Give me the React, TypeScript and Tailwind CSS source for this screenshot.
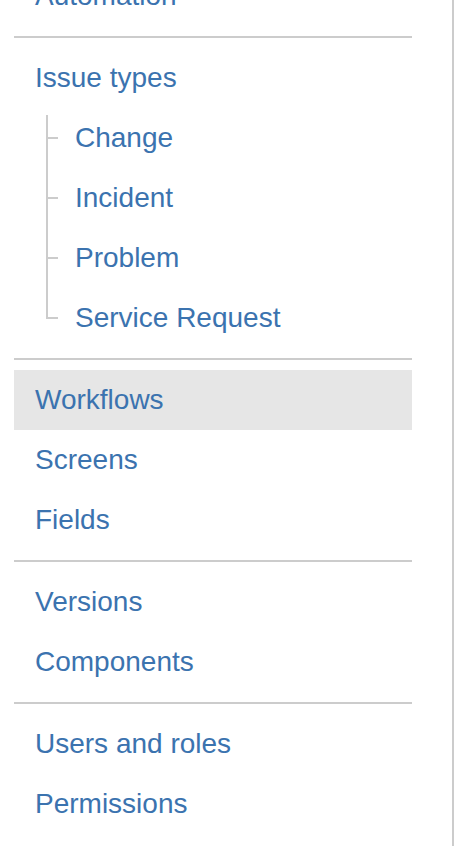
import React from "react";

type Item = { label: string; active?: boolean };

const sections: { items: Item[]; children?: string[] }[] = [
  { items: [{ label: "Issue types" }], children: ["Change", "Incident", "Problem", "Service Request"] },
  { items: [{ label: "Workflows", active: true }, { label: "Screens" }, { label: "Fields" }] },
  { items: [{ label: "Versions" }, { label: "Components" }] },
  { items: [{ label: "Users and roles" }, { label: "Permissions" }] },
];

function NavRow({ item }: { item: Item }) {
  return (
    <div className={`h-[60px] leading-[60px] pl-[21px] ${item.active ? "bg-[#e6e6e6]" : ""}`}>
      <a className="text-[#3b73af] cursor-pointer">{item.label}</a>
    </div>
  );
}

function ChildRow({ label, first, last }: { label: string; first: boolean; last: boolean }) {
  return (
    <div className="h-[60px] flex pl-[32px]">
      {/* tree connector */}
      <div className="w-[12px] flex flex-col">
        <div className={`${first ? "mt-[7px] h-[24px]" : "h-[31px]"} border-l-2 border-b-2 border-[#cccccc]`} />
        {!last && <div className="flex-1 border-l-2 border-[#cccccc]" />}
      </div>
      <a className="ml-[17px] leading-[60px] text-[#3b73af] cursor-pointer">{label}</a>
    </div>
  );
}

export default function App() {
  return (
    <div className="w-[456px] h-[846px] bg-white overflow-hidden">
      <div
        className="w-[454px] h-[846px] border-r-2 border-[#cccccc] overflow-hidden text-[28px]"
        style={{ fontFamily: '"Liberation Sans", Arial, sans-serif' }}
      >
        <div className="-mt-[34px] pl-[14px] pr-[40px]">
          {/* tail of the previous section */}
          <div className="pb-[10px]">
            <NavRow item={{ label: "Automation" }} />
          </div>
          {sections.map((s, i) => (
            <div key={i} className="border-t-2 border-[#cccccc] py-[10px]">
              {s.items.map((it) => (
                <NavRow key={it.label} item={it} />
              ))}
              {s.children?.map((c, j) => (
                <ChildRow key={c} label={c} first={j === 0} last={j === s.children!.length - 1} />
              ))}
            </div>
          ))}
        </div>
      </div>
    </div>
  );
}
